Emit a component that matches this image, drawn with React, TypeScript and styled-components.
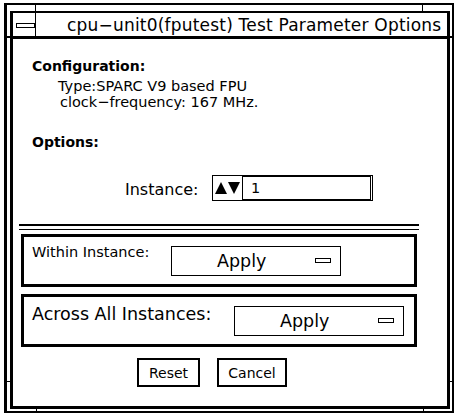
import React from 'react'
import styled, { createGlobalStyle } from 'styled-components'

const GlobalStyle = createGlobalStyle`
  html, body {
    margin: 0;
    padding: 0;
    background: #ffffff;
  }
  body {
    font-family: "DejaVu Sans", "Liberation Sans", sans-serif;
    color: #000000;
  }
`

// window frame (outer line + inner border with a small gap)
const Frame = styled.div`
  position: relative;
  box-sizing: border-box;
  width: 450px;
  height: 410px;
  margin: 3px 0 0 4px;
  border: 2px solid #000;
  border-left-width: 3px;
  padding: 6px 2px 2px 3px;
  display: flex;
  flex-direction: column;
`

const Tick = styled.span`
  position: absolute;
  background: #000;
`

const Inner = styled.div`
  flex: 1;
  display: flex;
  flex-direction: column;
  border: 3px solid #000;
  border-top-width: 2px;
  min-height: 0;
`

const TitleBar = styled.div`
  display: flex;
  height: 23px;
  border-bottom: 3px solid #000;
`

const MenuCell = styled.div`
  width: 22px;
  border-right: 1px solid #000;
  display: flex;
  align-items: center;
  justify-content: center;
  padding-top: 2px;
`

const MenuGlyph = styled.div`
  box-sizing: border-box;
  width: 19px;
  height: 5px;
  border: 1px solid #000;
  margin-left: 2px;
`

const Title = styled.div`
  flex: 1;
  padding: 1px 0 0 31px;
  font-size: 17px;
  letter-spacing: 0.2px;
  line-height: 22px;
  white-space: nowrap;
  overflow: hidden;
`

const Body = styled.div`
  flex: 1;
  display: flex;
  flex-direction: column;
  padding: 19px 0 0 0;
`

const Heading = styled.div<{ $gap?: number }>`
  font-weight: bold;
  font-size: 14px;
  line-height: 17px;
  margin: ${(p) => p.$gap || 0}px 0 0 19px;
`

const InfoLine = styled.div<{ $indent: number; $gap?: number }>`
  font-size: 14.5px;
  line-height: 16px;
  margin: ${(p) => p.$gap || 0}px 0 0 ${(p) => p.$indent}px;
  white-space: nowrap;
`

const InstanceRow = styled.div`
  display: flex;
  align-items: flex-start;
  margin: 24px 0 0 112px;
  height: 26px;
`

const InstanceLabel = styled.span`
  font-size: 16px;
  line-height: 19px;
  margin-top: 5px;
  width: 87px;
`

const NumericField = styled.div`
  box-sizing: border-box;
  display: flex;
  align-items: stretch;
  width: 161px;
  height: 26px;
  border: 1px solid #000;
  padding: 0 1px 0 1px;
`

const Arrows = styled.svg`
  align-self: center;
  margin: 0 1px 0 1px;
`

const NumberInput = styled.div`
  flex: 1;
  border: 1px solid #000;
  font-size: 14.5px;
  line-height: 22px;
  padding-left: 8px;
`

const DoubleRule = styled.div`
  width: 400px;
  height: 3px;
  margin: 23px 0 0 6px;
  border-top: 2px solid #000;
  border-bottom: 1px solid #000;
`

const ScopeBox = styled.div<{ $gap: number }>`
  box-sizing: border-box;
  display: flex;
  align-items: flex-start;
  width: 396px;
  height: 53px;
  margin: ${(p) => p.$gap}px 0 0 8px;
  border: 3px solid #000;
  padding: 7px 0 0 8px;
`

const ScopeLabel = styled.span<{ $large?: boolean }>`
  width: ${(p) => (p.$large ? 202 : 139)}px;
  font-size: ${(p) => (p.$large ? 17.5 : 14.5)}px;
  line-height: ${(p) => (p.$large ? 20 : 17)}px;
  margin-top: ${(p) => (p.$large ? 0 : 0)}px;
  white-space: nowrap;
`

const Dropdown = styled.div`
  box-sizing: border-box;
  display: flex;
  align-items: center;
  justify-content: space-between;
  width: 170px;
  height: 30px;
  margin-top: 2px;
  border: 1px solid #000;
  padding: 0 9px 1px 45px;
  font-size: 17.5px;
`

const DropMark = styled.span`
  box-sizing: border-box;
  width: 16px;
  height: 5px;
  border: 1px solid #000;
`

const ButtonRow = styled.div`
  display: flex;
  gap: 17px;
  margin: 11px 0 0 124px;
`

const Button = styled.div<{ $width: number }>`
  box-sizing: border-box;
  width: ${(p) => p.$width}px;
  height: 29px;
  border: 2px solid #000;
  display: flex;
  align-items: center;
  justify-content: center;
  font-size: 14px;
  padding-top: 1px;
`

const ticks = [
  { left: 28, top: 0, width: 1, height: 6 },
  { left: 415, top: 0, width: 1, height: 6 },
  { left: 29, top: 404, width: 1, height: 2 },
  { left: 416, top: 404, width: 1, height: 2 },
  { left: 0, top: 31, width: 3, height: 2 },
  { left: 443, top: 31, width: 2, height: 2 },
  { left: 0, top: 376, width: 3, height: 1 },
  { left: 443, top: 376, width: 2, height: 1 },
]

function SpinArrows() {
  return (
    <Arrows width="26" height="12" viewBox="0 0 26 12">
      <polygon points="0,12 6,0 12,12" fill="#000" />
      <polygon points="13,0 25,0 19,12" fill="#000" />
    </Arrows>
  )
}

function App() {
  return (
    <>
      <GlobalStyle />
      <Frame>
        {ticks.map((t, i) => (
          <Tick key={i} style={t} />
        ))}
        <Inner>
          <TitleBar>
            <MenuCell>
              <MenuGlyph />
            </MenuCell>
            <Title>cpu−unit0(fputest) Test Parameter Options</Title>
          </TitleBar>
          <Body>
            <Heading>Configuration:</Heading>
            <InfoLine $indent={45} $gap={3}>Type:SPARC V9 based FPU</InfoLine>
            <InfoLine $indent={47}>clock−frequency: 167 MHz.</InfoLine>
            <Heading $gap={24}>Options:</Heading>
            <InstanceRow>
              <InstanceLabel>Instance:</InstanceLabel>
              <NumericField>
                <SpinArrows />
                <NumberInput>1</NumberInput>
              </NumericField>
            </InstanceRow>
            <DoubleRule />
            <ScopeBox $gap={4}>
              <ScopeLabel>Within Instance:</ScopeLabel>
              <Dropdown>
                <span>Apply</span>
                <DropMark />
              </Dropdown>
            </ScopeBox>
            <ScopeBox $gap={7}>
              <ScopeLabel $large>Across All Instances:</ScopeLabel>
              <Dropdown>
                <span>Apply</span>
                <DropMark />
              </Dropdown>
            </ScopeBox>
            <ButtonRow>
              <Button $width={63}>Reset</Button>
              <Button $width={70}>Cancel</Button>
            </ButtonRow>
          </Body>
        </Inner>
      </Frame>
    </>
  )
}

export default App
